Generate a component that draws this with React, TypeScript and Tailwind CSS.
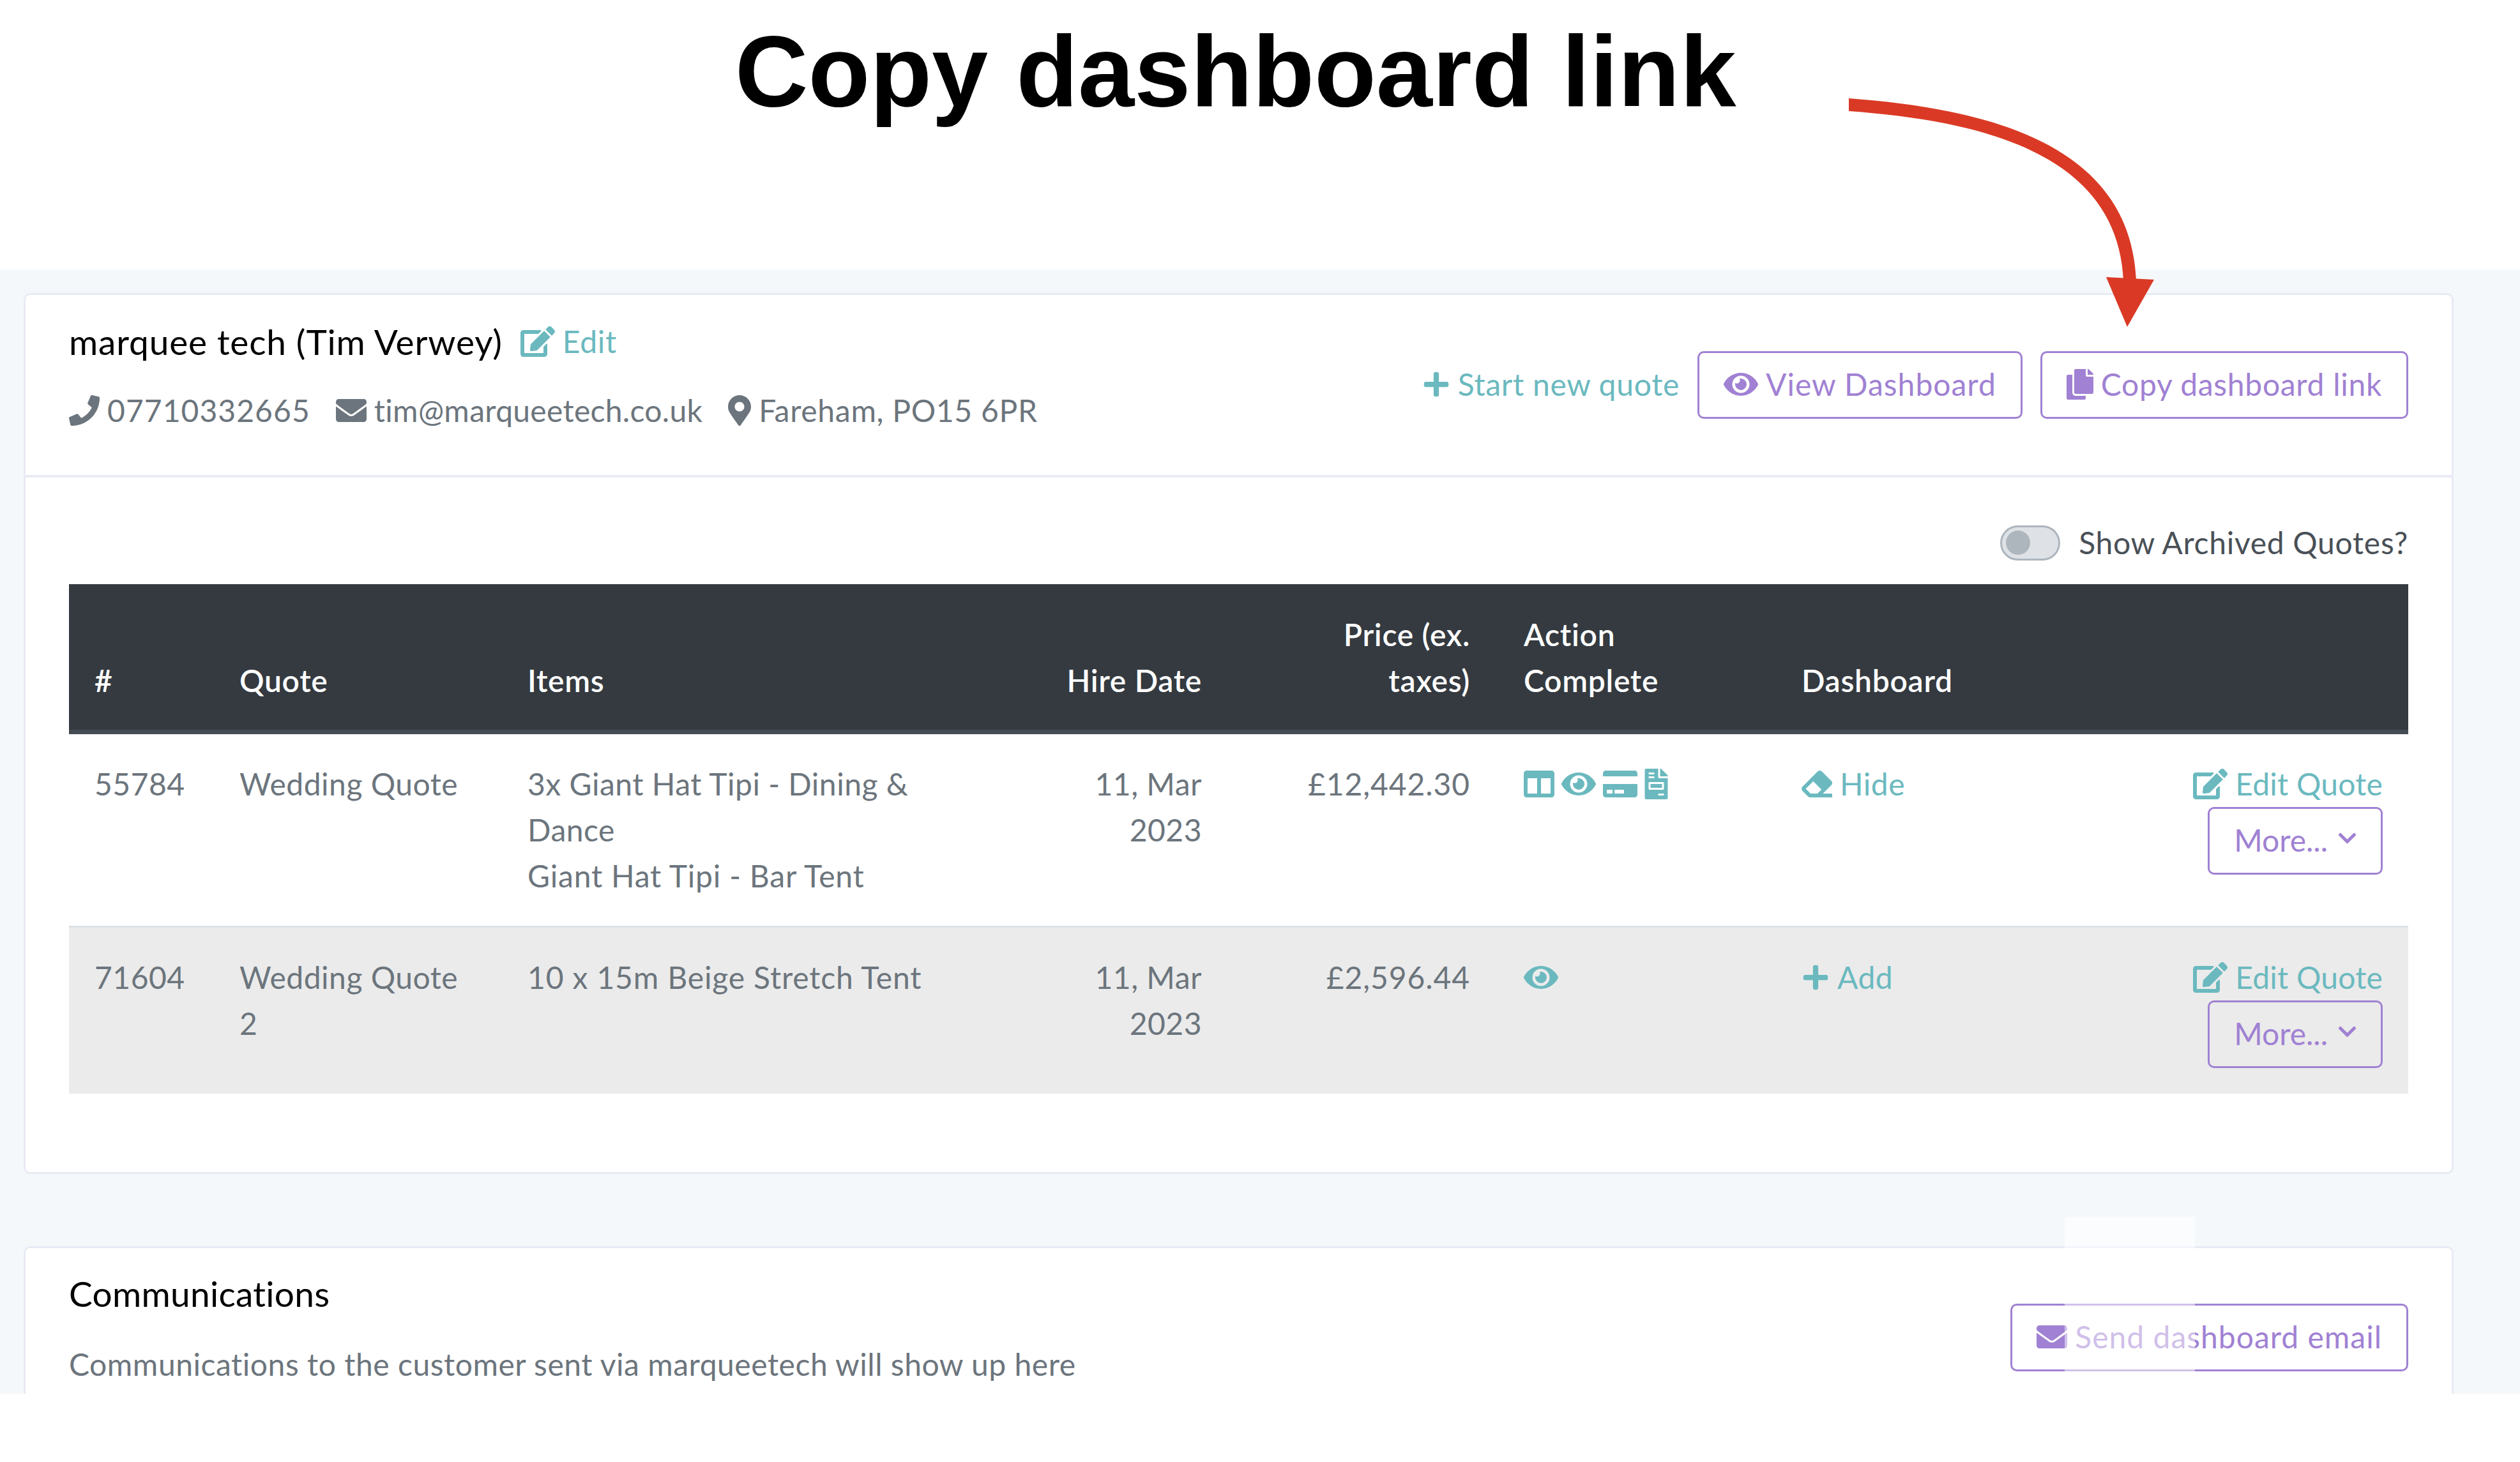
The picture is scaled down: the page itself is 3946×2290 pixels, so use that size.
import type { ReactNode } from "react";
import {
  FaChevronDown,
  FaColumns,
  FaCopy,
  FaCreditCard,
  FaEdit,
  FaEnvelope,
  FaEraser,
  FaEye,
  FaFileInvoice,
  FaMapMarkerAlt,
  FaPhone,
  FaPlus,
} from "react-icons/fa";

function OutlineButton({ children }: { children: ReactNode }) {
  return (
    <button className="flex h-[106px] items-center gap-[12px] rounded-[10px] border-[3px] border-[#a081d3] px-[38px] pb-[2px] text-[#a081d3]">
      {children}
    </button>
  );
}

function RowActions() {
  return (
    <div className="flex flex-col items-end">
      <span className="flex items-center gap-[12px] tracking-[0.2px] text-[#6bb9bf]">
        <FaEdit className="h-[48px] w-[54px]" />
        Edit Quote
      </span>
      <OutlineButton>
        <span className="tracking-normal">More...</span>
        <FaChevronDown className="mb-[6px] ml-[4px] h-[32px] w-[29px]" />
      </OutlineButton>
    </div>
  );
}

export default function App() {
  return (
    <div className="relative h-[2290px] w-[3946px] overflow-hidden bg-white font-['Lato',sans-serif] text-[48px] leading-[72px] tracking-[0.7px] text-[#6c757d]">
      <div className="h-[422px] pl-[1151px] pt-[19px]">
        <h1 className="font-['Liberation_Sans',sans-serif] text-[158.5px] leading-[186px] font-bold tracking-normal text-black">
          Copy dashboard link
        </h1>
      </div>

      <svg className="absolute top-0 left-0 z-10 h-[600px] w-[3946px]" viewBox="0 0 3946 600">
        <path d="M2895 154 C3135 172 3336 235 3345 440 L3325 440 C3316 245 3115 190 2895 174 Z" fill="#da3a25" />
        <path d="M3298 434 L3373 438 L3331 512 Z" fill="#da3a25" />
      </svg>

      <div className="relative h-[1761px] overflow-hidden bg-[#f5f8fb] pt-[37px] pr-[104px] pl-[37px]">
        <section className="h-[1380px] rounded-[10px] border-[3px] border-[#e8ebf4] bg-white">
          <header className="flex h-[286px] items-center justify-between border-b-[4px] border-[#e8ebf4] px-[68px]">
            <div className="flex flex-col gap-[36px] pb-[28px]">
              <div className="flex items-center gap-[28px]">
                <span className="text-[55px] tracking-[0.85px] text-black">marquee tech (Tim Verwey)</span>
                <span className="flex items-center gap-[12px] text-[#6bb9bf]">
                  <FaEdit className="h-[48px] w-[54px]" />
                  Edit
                </span>
              </div>
              <div className="flex items-center gap-[40px]">
                <span className="flex items-center gap-[12px] tracking-[1.05px]">
                  <FaPhone className="h-[48px] w-[48px]" />
                  07710332665
                </span>
                <span className="flex items-center gap-[12px] tracking-[0.3px]">
                  <FaEnvelope className="h-[48px] w-[48px]" />
                  tim@marqueetech.co.uk
                </span>
                <span className="flex items-center gap-[12px]">
                  <FaMapMarkerAlt className="h-[48px] w-[36px]" />
                  Fareham, PO15 6PR
                </span>
              </div>
            </div>
            <div className="flex items-center gap-[28px]">
              <span className="flex items-center gap-[12px] pb-[2px] text-[#6bb9bf]">
                <FaPlus className="h-[44px] w-[44px]" />
                Start new quote
              </span>
              <OutlineButton>
                <FaEye className="h-[48px] w-[54px]" />
                <span className="tracking-[1px]">View Dashboard</span>
              </OutlineButton>
              <OutlineButton>
                <FaCopy className="h-[48px] w-[42px]" />
                Copy dashboard link
              </OutlineButton>
            </div>
          </header>

          <div className="px-[68px] pt-[66px]">
            <div className="mb-[29px] flex items-center justify-end gap-[29px] text-[#495057]">
              <span className="flex h-[55px] w-[94px] items-center rounded-full border-[3px] border-[#adb5bd] bg-[#dee2e6] pl-[6px]">
                <span className="h-[38px] w-[38px] rounded-full bg-[#adb5bd]" />
              </span>
              Show Archived Quotes?
            </div>

            <table className="w-full table-fixed border-collapse text-left">
              <colgroup>
                <col className="w-[227px]" />
                <col className="w-[451px]" />
                <col className="w-[730px]" />
                <col className="w-[406px]" />
                <col className="w-[422px]" />
                <col className="w-[437px]" />
                <col className="w-[400px]" />
                <col />
              </colgroup>
              <thead className="bg-[#343a40] font-semibold text-white">
                <tr className="border-b-[7px] border-[#454b52] align-bottom">
                  <th className="px-[40px] pt-[43px] pb-[41px] font-semibold">#</th>
                  <th className="px-[40px] pt-[43px] pb-[41px] font-semibold">Quote</th>
                  <th className="px-[40px] pt-[43px] pb-[41px] font-semibold">Items</th>
                  <th className="px-[40px] pt-[43px] pb-[41px] text-right font-semibold">Hire Date</th>
                  <th className="pt-[43px] pr-[42px] pb-[41px] pl-[40px] text-right font-semibold">
                    Price (ex.
                    <br />
                    taxes)
                  </th>
                  <th className="pt-[43px] pr-[40px] pb-[41px] pl-[42px] font-semibold">
                    Action
                    <br />
                    Complete
                  </th>
                  <th className="px-[40px] pt-[43px] pb-[41px] font-semibold">Dashboard</th>
                  <th className="p-[40px]" />
                </tr>
              </thead>
              <tbody className="tracking-[0.5px]">
                <tr className="align-top">
                  <td className="px-[40px] py-[42px]">55784</td>
                  <td className="px-[40px] py-[42px]">Wedding Quote</td>
                  <td className="px-[40px] py-[42px]">
                    3x Giant Hat Tipi - Dining &amp; Dance
                    <br />
                    <span className="tracking-[0.8px]">Giant Hat Tipi - Bar Tent</span>
                  </td>
                  <td className="px-[40px] py-[42px] text-right">
                    11, Mar
                    <br />
                    2023
                  </td>
                  <td className="py-[42px] pr-[42px] pl-[40px] text-right tracking-[0.9px]">£12,442.30</td>
                  <td className="py-[42px] pr-[40px] pl-[42px]">
                    <div className="flex h-[72px] items-center gap-[11px] text-[#6bb9bf]">
                      <FaColumns className="h-[48px] w-[48px]" />
                      <FaEye className="h-[48px] w-[54px]" />
                      <FaCreditCard className="h-[48px] w-[54px]" />
                      <FaFileInvoice className="h-[48px] w-[37px]" />
                    </div>
                  </td>
                  <td className="px-[40px] py-[42px]">
                    <span className="flex items-center gap-[12px] text-[#6bb9bf]">
                      <FaEraser className="h-[48px] w-[48px]" />
                      Hide
                    </span>
                  </td>
                  <td className="px-[40px] pt-[42px] pb-[40px]">
                    <RowActions />
                  </td>
                </tr>
                <tr className="border-t-[3px] border-[#dee2e6] bg-[#ebebeb] align-top">
                  <td className="px-[40px] py-[42px]">71604</td>
                  <td className="px-[40px] py-[42px]">Wedding Quote 2</td>
                  <td className="px-[40px] py-[42px] tracking-[0.85px]">10 x 15m Beige Stretch Tent</td>
                  <td className="px-[40px] py-[42px] text-right">
                    11, Mar
                    <br />
                    2023
                  </td>
                  <td className="py-[42px] pr-[42px] pl-[40px] text-right tracking-[0.9px]">£2,596.44</td>
                  <td className="py-[42px] pr-[40px] pl-[42px]">
                    <div className="flex h-[72px] items-center text-[#6bb9bf]">
                      <FaEye className="h-[48px] w-[54px]" />
                    </div>
                  </td>
                  <td className="px-[40px] py-[42px]">
                    <span className="flex items-center gap-[12px] text-[#6bb9bf]">
                      <FaPlus className="h-[44px] w-[44px]" />
                      Add
                    </span>
                  </td>
                  <td className="px-[40px] pt-[42px] pb-[40px]">
                    <RowActions />
                  </td>
                </tr>
              </tbody>
            </table>
          </div>
        </section>

        <section className="mt-[113px] flex h-[400px] items-start justify-between rounded-[10px] border-[3px] border-[#e8ebf4] bg-white px-[68px] pt-[35px]">
          <div className="flex flex-col gap-[39px]">
            <span className="text-[55px] tracking-[0.3px] text-black">Communications</span>
            <span className="tracking-[0.53px]">Communications to the customer sent via marqueetech will show up here</span>
          </div>
          <div className="pt-[52px]">
            <OutlineButton>
              <FaEnvelope className="h-[48px] w-[48px]" />
              <span className="tracking-[1px]">Send dashboard email</span>
            </OutlineButton>
          </div>
        </section>

        {/* washed out patch sitting over the send button */}
        <div className="absolute top-[1484px] left-[3233px] h-[260px] w-[204px] bg-white/50" />
      </div>
    </div>
  );
}
